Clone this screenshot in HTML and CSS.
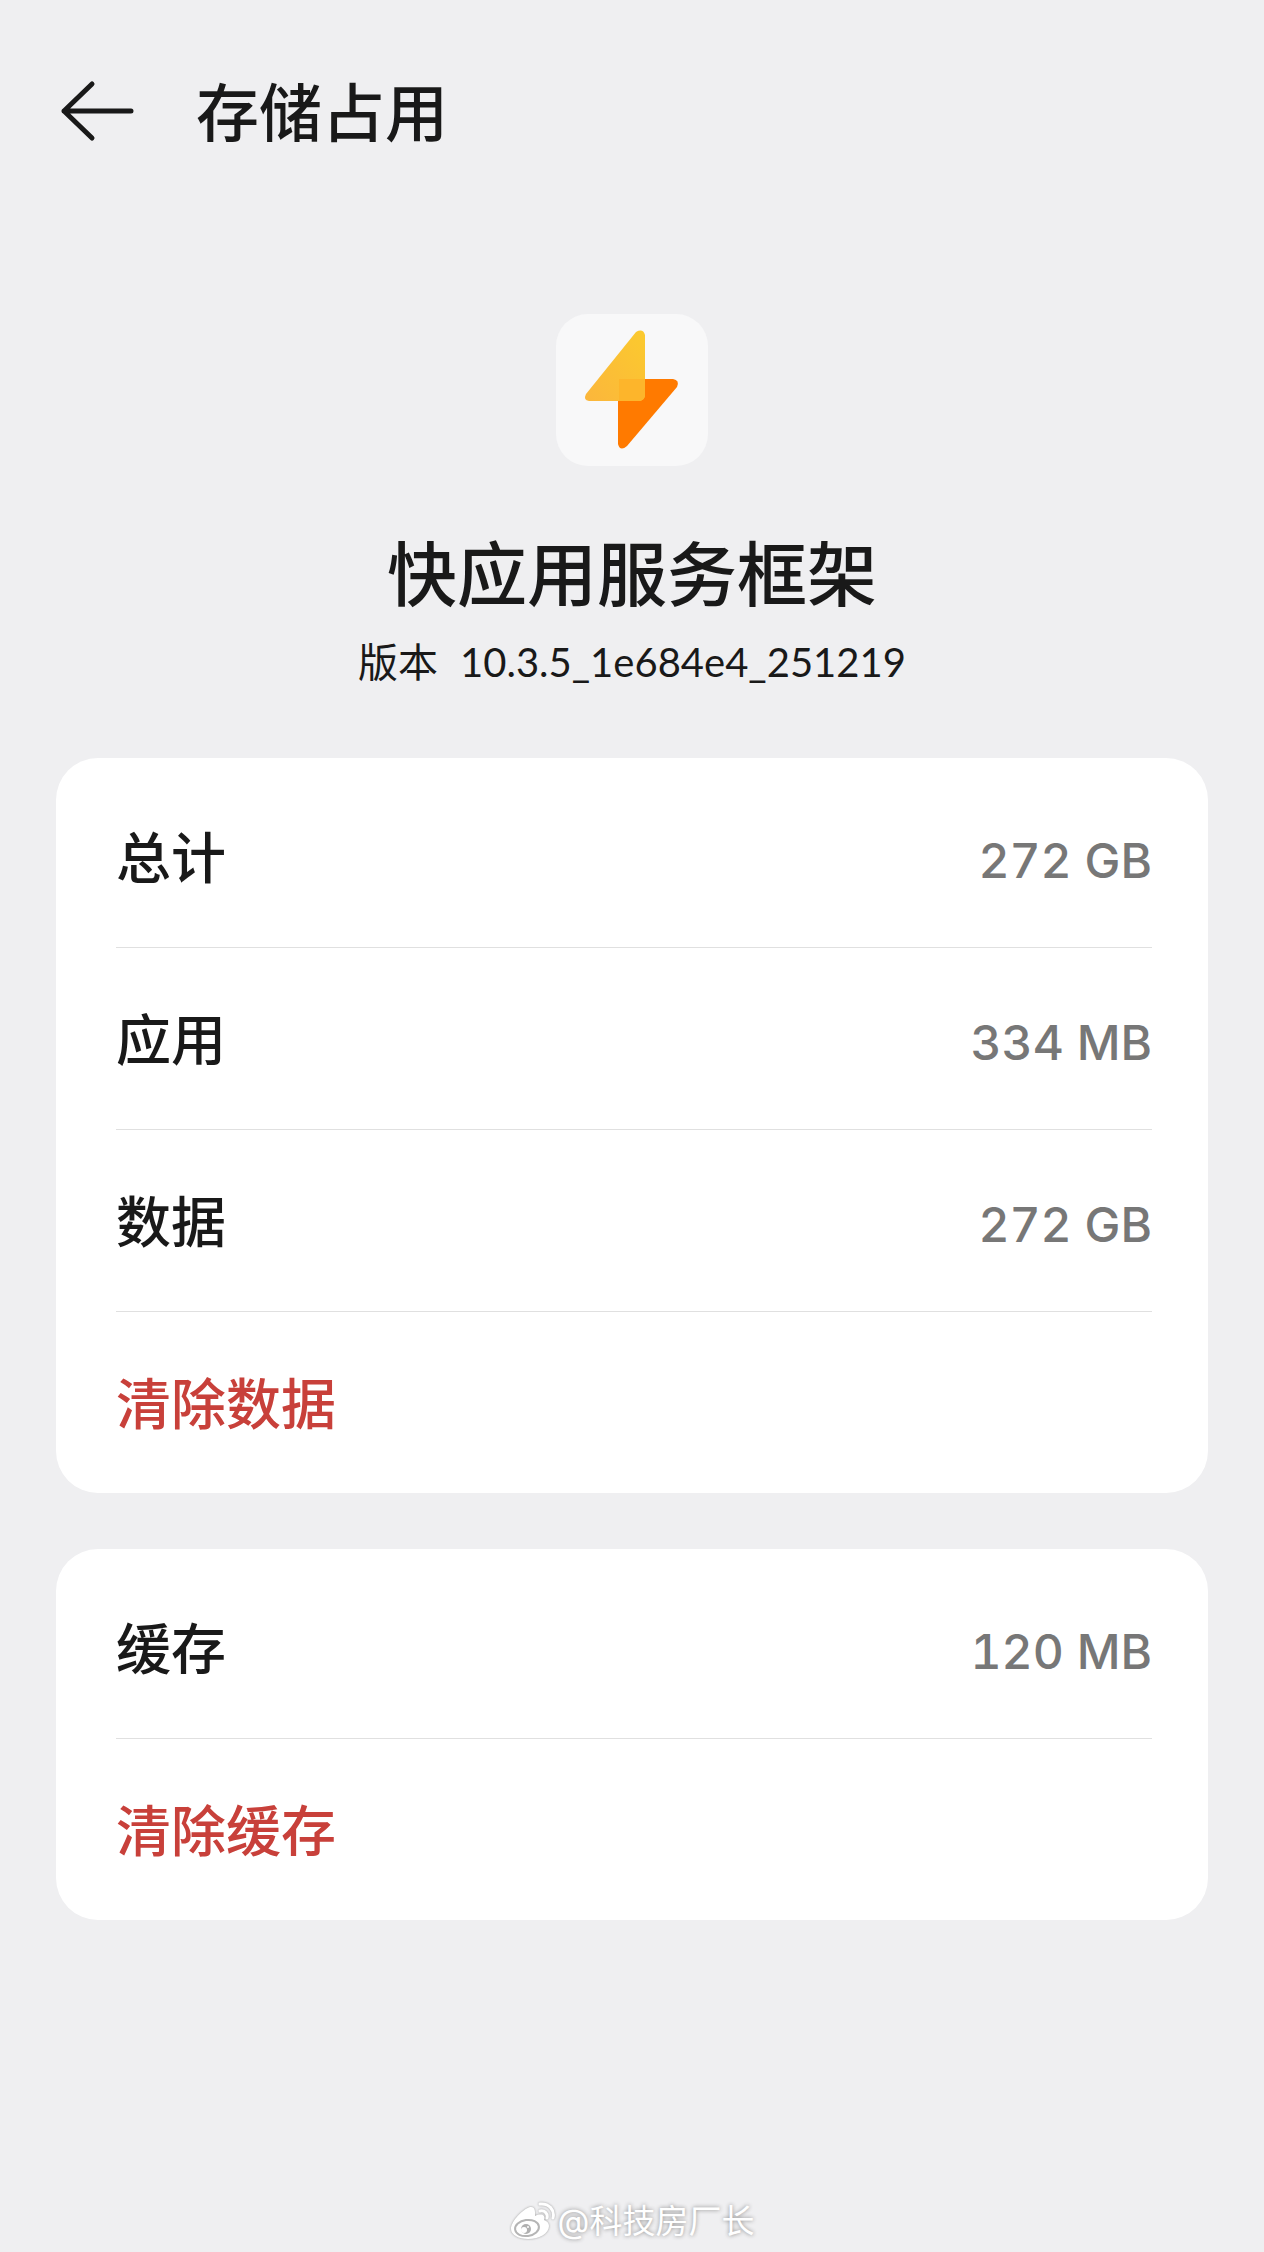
FILE: index.html
```html
<!DOCTYPE html>
<html lang="zh-CN">
<head>
<meta charset="UTF-8">
<meta name="viewport" content="width=device-width, initial-scale=1.0">
<title>存储占用</title>
<link rel="stylesheet" href="styles.css">
</head>
<body>
<header class="header">
<button class="back" type="button" aria-label="返回">
<svg viewBox="0 0 76 64" width="76" height="64" fill="none" stroke="currentColor" stroke-width="5" stroke-linecap="round" stroke-linejoin="round">
<path d="M32 5 4 32l28 27M4 32h67"/>
</svg>
</button>
<h1>存储占用</h1>
</header>
<main class="container">
<section class="app">
<svg class="app-icon" viewBox="0 0 152 152" width="152" height="152">
<defs>
<linearGradient id="yellow" x1="1" y1="0" x2="0" y2="1">
<stop offset="0" stop-color="#fbca2e"/>
<stop offset="1" stop-color="#fbb63c"/>
</linearGradient>
</defs>
<rect width="152" height="152" rx="32" fill="#f8f8f9"/>
<path d="M67 65h50q7 1 4 8L71 132q-7 6-9-2V69q1-4 5-4z" fill="#ff7a00"/>
<path d="M80 18q7-4 9 3v61q-1 4-5 5H33q-6-1-3-7z" fill="url(#yellow)"/>
<path d="M63 65h26v17q-1 4-5 5H63z" fill="#fdb52b"/>
</svg>
<h2 class="app-name">快应用服务框架</h2>
<p class="app-version"><span>版本</span><span>10.3.5_1e684e4_251219</span></p>
</section>
<section class="card">
<div class="row"><span class="label">总计</span><span class="value">272 GB</span></div>
<div class="row"><span class="label">应用</span><span class="value">334 MB</span></div>
<div class="row"><span class="label">数据</span><span class="value">272 GB</span></div>
<button class="row clear" type="button">清除数据</button>
</section>
<section class="card">
<div class="row"><span class="label">缓存</span><span class="value">120 MB</span></div>
<button class="row clear" type="button">清除缓存</button>
</section>
</main>
<footer class="footer">
<svg viewBox="0 0 46 40" width="46" height="40">
<path d="M20 6C13 8 1 20 1 28c0 6 8 10 17 10 12 0 21-6 21-13 0-3-2-5-5-6 2-5-3-7-9-4 0-3 1-10-5-9z" fill="#fff"/>
<ellipse cx="17" cy="27" rx="12" ry="8" fill="#fff" stroke="#b5b5b5" stroke-width="2" transform="rotate(-8 17 27)"/>
<circle cx="16" cy="28" r="5" fill="#b0b0b0"/>
<circle cx="14" cy="29" r="3" fill="#fff"/>
<circle cx="18" cy="26" r="1" fill="#fff"/>
<path d="M30 3c9-1 15 6 13 14M30 10c5-1 8 3 7 7" fill="none" stroke="#fff" stroke-width="3" stroke-linecap="round"/>
</svg>
<span>@科技房厂长</span>
</footer>
</body>
</html>
```

FILE: styles.css
```css
:root {
    --page-color: #efeff1;
    --card-color: #fff;
    --text-color: #191919;
    --value-color: #777;
    --line-color: #e0e0e0;
    --danger-color: #c8403a;
}
* {
    margin: 0;
    padding: 0;
    box-sizing: border-box;
}
body {
    display: flex;
    flex-direction: column;
    min-height: 100vh;
    background-color: var(--page-color);
    color: var(--text-color);
    font-family: Inter, 'Noto Sans CJK SC', sans-serif;
}
button {
    border: none;
    background: none;
    font-family: inherit;
    cursor: pointer;
}
.header {
    display: flex;
    align-items: center;
    gap: 60px;
    height: 222px;
    padding: 0 60px;
}
.header h1 {
    padding-top: 4px;
    font-size: 63px;
    font-weight: 500;
    line-height: 90px;
}
.back {
    display: flex;
    color: var(--text-color);
}
.container {
    padding: 92px 56px 60px;
}
.app {
    display: flex;
    flex-direction: column;
    align-items: center;
    margin-bottom: 66px;
}
.app-icon {
    margin-bottom: 60px;
}
.app-name {
    font-size: 70px;
    font-weight: 500;
    line-height: 100px;
    margin-bottom: 6px;
}
.app-version {
    display: flex;
    gap: 22px;
    font-family: Lato, 'Noto Sans CJK SC', sans-serif;
    font-size: 40px;
    line-height: 60px;
}
.card {
    padding: 8px 56px 0 60px;
    margin-bottom: 56px;
    background-color: var(--card-color);
    border-radius: 42px;
}
.row {
    display: flex;
    align-items: baseline;
    justify-content: space-between;
    width: 100%;
    border-bottom: 1px solid var(--line-color);
    padding-top: 4px;
    font-size: 55px;
    font-weight: 500;
    line-height: 177px;
}
.row:last-child {
    border-bottom: none;
}
.value {
    color: var(--value-color);
    font-size: 48px;
    line-height: 60px;
    font-variant-numeric: tabular-nums;
}
.clear {
    color: var(--danger-color);
}
.footer {
    display: flex;
    align-items: center;
    justify-content: center;
    gap: 2px;
    margin-top: auto;
    padding-bottom: 6px;
    color: #fff;
    font-size: 33px;
    line-height: 50px;
    text-shadow: 0 0 4px #888;
}
.footer svg {
    filter: drop-shadow(0 0 1px #999);
}
```
